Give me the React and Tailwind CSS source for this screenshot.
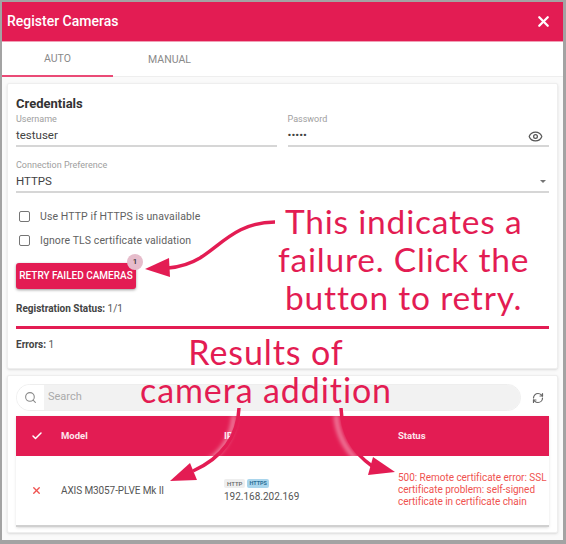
import { X, Eye, Search, RefreshCw, Check } from "lucide-react";

const Field = ({ label, value, className, children }) => (
  <div className={className}>
    <div className="text-[9px] leading-[11px] text-[#9e9e9e]">{label}</div>
    <div className="flex items-center justify-between h-[22px] pt-[2px] border-b-2 border-[#d6d6d6] text-[11.5px] text-[#424242]">
      <span>{value}</span>
      {children}
    </div>
  </div>
);

const Checkbox = ({ label }) => (
  <div className="flex items-center h-[24px]">
    <span className="w-[11px] h-[11px] ml-[3px] border border-[#757575] rounded-[2px]" />
    <span className="ml-[10px] pt-[1px] text-[10.5px] tracking-[0.1px] text-[#616161]">{label}</span>
  </div>
);

const Note = ({ className, children }) => (
  <div className={`absolute text-[#e31c53] text-center whitespace-nowrap font-['Lato',sans-serif] leading-[38px] ${className}`}>
    {children}
  </div>
);

const App = () => {
  return (
    <div className="relative w-[566px] h-[544px] overflow-hidden border-2 border-r-[3px] border-b-[4px] border-[#a3a3a3] bg-[#fafafa] font-['Roboto',sans-serif]">
      {/* Title bar */}
      <div className="flex items-center justify-between h-[40px] pl-[5px] pr-[11px] pb-[1px] bg-[#e31c53] border-b border-[#f0a0b6] text-white">
        <span className="text-[14px] font-medium">Register Cameras</span>
        <X size={17} strokeWidth={3.2} />
      </div>

      {/* Tabs */}
      <div className="flex h-[35px] pt-[1px] bg-white border-b border-[#eeeeee]">
        <div className="flex items-center justify-center w-[111px] -mb-px border-b-2 border-[#ea4a76] text-[10.5px] text-[#8a8a8a]">AUTO</div>
        <div className="flex items-center justify-center w-[113px] text-[10.5px] text-[#8a8a8a]">MANUAL</div>
      </div>

      <div className="flex flex-col gap-[6px] px-[5px] pt-[6px]">
        {/* Credentials */}
        <div className="h-[286px] px-[8px] pt-[12px] bg-white border border-[#eeeeee] rounded-[2px] shadow-sm">
          <h2 className="text-[13px] leading-[16px] font-bold text-[#333333]">Credentials</h2>
          <div className="flex gap-[11px] mt-[2px]">
            <Field label="Username" value="testuser" className="w-[261px]" />
            <Field label="Password" value="•••••" className="w-[262px]">
              <Eye size={15} className="mr-[6px] text-[#555555]" />
            </Field>
          </div>
          <div className="relative mt-[13px]">
            <Field label="Connection Preference" value="HTTPS" />
            <span className="absolute right-[3px] top-[20px] border-x-[3px] border-t-[3px] border-x-transparent border-t-[#757575]" />
          </div>
          <div className="mt-[11px]">
            <Checkbox label="Use HTTP if HTTPS is unavailable" />
            <Checkbox label="Ignore TLS certificate validation" />
          </div>
          <div className="relative w-[120px] mt-[10px]">
            <button className="w-full h-[26px] bg-[#e31c53] rounded-[3px] shadow-[0_1px_3px_rgba(0,0,0,0.4)] text-[10px] font-medium text-white whitespace-nowrap">
              RETRY FAILED CAMERAS
            </button>
            <span className="absolute -right-[7px] -top-[8px] flex items-center justify-center w-[16px] h-[16px] rounded-full bg-[#e6bccb] text-[8px] font-medium text-[#333333]">1</span>
          </div>
          <div className="mt-[13px] text-[10px] leading-[14px] text-[#555555]">
            <b className="font-bold text-[#444444]">Registration Status:</b> 1/1
          </div>
          <div className="mt-[10px] h-[3px] bg-[#e31c53]" />
          <div className="mt-[9px] text-[10px] leading-[14px] text-[#555555]">
            <b className="font-bold text-[#444444]">Errors:</b> 1
          </div>
        </div>

        {/* Results */}
        <div className="h-[158px] px-[8px] pt-[8px] bg-white border border-[#eeeeee] rounded-[2px] shadow-sm">
          <div className="flex items-center">
            <div className="flex flex-1 h-[27px] mr-[11px] border border-[#eeeeee] rounded-full overflow-hidden">
              <div className="flex items-center justify-center w-[27px] bg-white">
                <Search size={13} className="text-[#8a8a8a]" />
              </div>
              <div className="flex items-center flex-1 pl-[4px] bg-[#f2f2f2] text-[11px] text-[#aaaaaa]">Search</div>
            </div>
            <RefreshCw size={12} strokeWidth={2.4} className="mr-[5px] text-[#666666]" />
          </div>
          <div className="mt-[5px] border-b-2 border-[#d0d0d0] shadow-sm">
            <div className="flex items-center h-[40px] bg-[#e31c53] text-[9.5px] font-bold text-[#fde6ec]">
              <span className="flex justify-center w-[41px] mr-[4px]">
                <Check size={12} strokeWidth={3} className="text-white" />
              </span>
              <span className="w-[163px]">Model</span>
              <span className="w-[174px]">IP</span>
              <span>Status</span>
            </div>
            <div className="flex items-center h-[69px]">
              <span className="flex justify-center w-[41px] mr-[4px]">
                <X size={11} strokeWidth={3} className="text-[#ef5350]" />
              </span>
              <span className="w-[163px] text-[10px] tracking-[-0.1px] text-[#555555]">AXIS M3057-PLVE Mk II</span>
              <div className="w-[174px] pt-[1px]">
                <div className="flex gap-[2px]">
                  <span className="px-[3px] h-[9px] leading-[9px] rounded-[2px] bg-[#eeeeee] text-[6px] font-medium text-[#666666]">HTTP</span>
                  <span className="px-[2px] h-[9px] leading-[9px] rounded-[2px] bg-[#a9d5ec] text-[5.5px] font-bold text-[#2a6f97]">HTTPS</span>
                </div>
                <div className="mt-[2px] text-[10px] leading-[13px] text-[#555555]">192.168.202.169</div>
              </div>
              <div className="w-[150px] -mt-[1px] text-[10px] leading-[12px] tracking-[-0.03px] text-[#ef5350]">
                500: Remote certificate error: SSL certificate problem: self-signed certificate in certificate chain
              </div>
            </div>
          </div>
        </div>
      </div>

      {/* Annotations laid over the dialog */}
      <Note className="left-[276px] top-[200px] text-[33.5px] tracking-[0.8px]">
        This indicates a<br />failure. Click the<br />button to retry.
      </Note>
      <Note className="left-[138px] top-[331px] text-[34px] tracking-[0.9px]">
        Results of<br />camera addition
      </Note>
      <svg className="absolute -left-[2px] -top-[2px] pointer-events-none" width="566" height="544" fill="none">
        <defs>
          <filter id="arrowGlow" x="-50%" y="-50%" width="200%" height="200%">
            <feGaussianBlur stdDeviation="2" />
          </filter>
        </defs>
        {/* soft glow behind the arrows, shows up on the red table header */}
        <g filter="url(#arrowGlow)" stroke="#ffffff" strokeOpacity="0.5" strokeWidth="4">
          <path d="M234 415 C233 438 220 456 200 466" />
          <path d="M336 415 C337 434 346 452 362 464" />
        </g>
        <path d="M275 222 C238 222 222 244 200 258 C190 264 180 267 168 268" stroke="#e31c53" strokeWidth="3.5" />
        <path d="M145 269 L169 258 L170 277 Z" fill="#e31c53" />
        <path d="M239 408 C238 436 222 458 193 471" stroke="#e31c53" strokeWidth="3.5" />
        <path d="M170 481 L190 463 L197 480 Z" fill="#e31c53" />
        <path d="M341 408 C342 432 352 452 372 466" stroke="#e31c53" strokeWidth="3.5" />
        <path d="M395 472 L368 475 L373 457 Z" fill="#e31c53" />
      </svg>
    </div>
  );
};

export default App;
